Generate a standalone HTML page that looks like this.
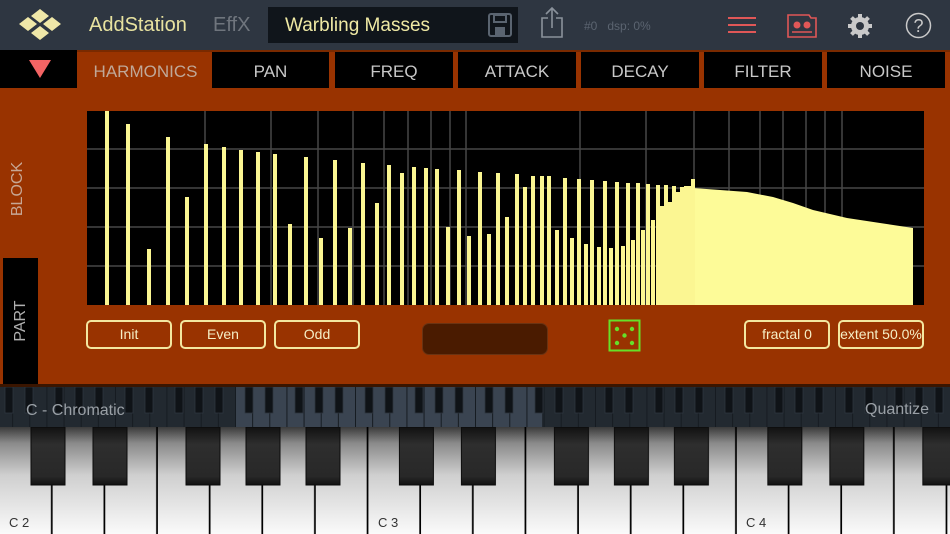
<!DOCTYPE html>
<html><head><meta charset="utf-8"><style>
*{margin:0;padding:0;box-sizing:border-box}
body{width:950px;height:534px;overflow:hidden;background:#993300;font-family:"Liberation Sans",sans-serif;position:relative}
.a{position:absolute}
.top{left:0;top:0;width:950px;height:50px;background:#2e3641}
.tab{position:absolute;top:52px;height:36px;background:#000;color:#c8c8c8;font-size:17px;text-align:center;line-height:39px}
.btn{position:absolute;top:320px;height:29px;border:2px solid #f3e7a0;border-radius:5px;color:#f6efc6;font-size:14px;text-align:center;line-height:25px}
</style></head><body>
<div class="a top"></div>
<svg class="a" style="left:16px;top:8px" width="48" height="34" viewBox="0 0 48 34">
<g fill="#efe7a8"><polygon points="24,1 33,8 24,15 15,8"/><polygon points="12,9 21,16 12,23 3,16"/><polygon points="36,9 45,16 36,23 27,16"/><polygon points="24,18 33,25 24,32 15,25"/></g></svg>
<div class="a" style="left:89px;top:14px;font-size:20px;color:#e8e3a0">AddStation</div>
<div class="a" style="left:213px;top:14px;font-size:20px;color:#6f757d">EffX</div>
<div class="a" style="left:268px;top:7px;width:250px;height:36px;background:#10151b"></div>
<div class="a" style="left:285px;top:15px;font-size:19px;color:#efe9a4">Warbling Masses</div>
<svg class="a" style="left:488px;top:13px" width="24" height="24" viewBox="0 0 24 24"><rect x="1" y="1" width="22" height="22" rx="2" fill="none" stroke="#5a6470" stroke-width="2"/><rect x="6" y="2" width="12" height="7" fill="none" stroke="#5a6470" stroke-width="2"/><rect x="7" y="14" width="10" height="9" fill="#5a6470"/></svg>
<svg class="a" style="left:540px;top:6px" width="24" height="32" viewBox="0 0 24 32"><path d="M8 12H2V31H22V12H16M12 22V2M6 8L12 2L18 8" fill="none" stroke="#8a929b" stroke-width="1.6"/></svg>
<div class="a" style="left:584px;top:19px;font-size:12px;color:#5b6470">#0&nbsp;&nbsp;&nbsp;dsp: 0%</div>
<svg class="a" style="left:728px;top:16px" width="28" height="18"><g stroke="#e05757" stroke-width="2"><line x1="0" y1="2" x2="28" y2="2"/><line x1="0" y1="9" x2="28" y2="9"/><line x1="0" y1="16" x2="28" y2="16"/></g></svg>
<svg class="a" style="left:787px;top:14px" width="30" height="24" viewBox="0 0 30 24"><path d="M1 1H22L24 4H29V23H1Z" fill="none" stroke="#e05757" stroke-width="1.6"/><circle cx="10" cy="11" r="3.5" fill="#e05757"/><circle cx="20" cy="11" r="3.5" fill="#e05757"/><line x1="5" y1="18" x2="25" y2="18" stroke="#e05757" stroke-width="1.5"/></svg>
<svg class="a" style="left:847px;top:13px" width="26" height="26" viewBox="0 0 26 26"><g fill="#c9c9c9"><circle cx="13" cy="13" r="9"/><g stroke="#c9c9c9" stroke-width="4"><line x1="13" y1="1" x2="13" y2="25"/><line x1="1" y1="13" x2="25" y2="13"/><line x1="4.5" y1="4.5" x2="21.5" y2="21.5"/><line x1="21.5" y1="4.5" x2="4.5" y2="21.5"/></g></g><circle cx="13" cy="13" r="4" fill="#2e3641"/></svg>
<svg class="a" style="left:905px;top:12px" width="27" height="27" viewBox="0 0 27 27"><circle cx="13.5" cy="13.5" r="12" fill="none" stroke="#c9c9c9" stroke-width="1.5"/><text x="13.5" y="20" font-size="18" text-anchor="middle" fill="#c9c9c9" font-family="Liberation Sans">?</text></svg>

<div class="a" style="left:0;top:50px;width:950px;height:2px;background:#7a2a00"></div>
<div class="a" style="left:0;top:50px;width:77px;height:38px;background:#000"></div>
<svg class="a" style="left:28px;top:59px" width="24" height="20"><polygon points="1,1 23,1 12,19" fill="#f46464"/></svg>
<div class="a" style="left:78px;top:62px;width:135px;text-align:center;font-size:17px;color:#c0a898">HARMONICS</div>
<div class="tab" style="left:212px;width:117px">PAN</div>
<div class="tab" style="left:335px;width:118px">FREQ</div>
<div class="tab" style="left:458px;width:118px">ATTACK</div>
<div class="tab" style="left:581px;width:118px">DECAY</div>
<div class="tab" style="left:704px;width:118px">FILTER</div>
<div class="tab" style="left:827px;width:118px">NOISE</div>

<div class="a" style="left:0;top:110px;width:36px;height:160px;"><div style="position:absolute;left:-62px;top:70px;width:160px;text-align:center;transform:rotate(-90deg);font-size:16px;color:#c7a794">BLOCK</div></div>
<div class="a" style="left:3px;top:258px;width:35px;height:126px;background:#000"><div style="position:absolute;left:-45px;top:54px;width:126px;text-align:center;transform:rotate(-90deg);font-size:16px;color:#b0b0b0">PART</div></div>

<svg class="a" style="left:0;top:0" width="950" height="320">
<rect x="87" y="111" width="837" height="194" fill="#000"/>
<g stroke="#474747" stroke-width="1.5">
<line x1="87" y1="149" x2="924" y2="149"/><line x1="87" y1="188" x2="924" y2="188"/><line x1="87" y1="227" x2="924" y2="227"/><line x1="87" y1="266" x2="924" y2="266"/>
<line x1="205" y1="111" x2="205" y2="305"/><line x1="271" y1="111" x2="271" y2="305"/><line x1="318" y1="111" x2="318" y2="305"/><line x1="353" y1="111" x2="353" y2="305"/><line x1="384" y1="111" x2="384" y2="305"/><line x1="408" y1="111" x2="408" y2="305"/><line x1="431" y1="111" x2="431" y2="305"/><line x1="450" y1="111" x2="450" y2="305"/><line x1="466" y1="111" x2="466" y2="305"/><line x1="580" y1="111" x2="580" y2="305"/><line x1="646" y1="111" x2="646" y2="305"/><line x1="694" y1="111" x2="694" y2="305"/><line x1="729" y1="111" x2="729" y2="305"/><line x1="760" y1="111" x2="760" y2="305"/><line x1="783" y1="111" x2="783" y2="305"/><line x1="806" y1="111" x2="806" y2="305"/><line x1="825" y1="111" x2="825" y2="305"/><line x1="842" y1="111" x2="842" y2="305"/>
</g>
<polygon points="693,188 747,192 773,197 793,203 813,210 847,218 880,223 913,228 913,305 693,305" fill="#fdfb98"/>
<g fill="#fbf692" transform="translate(-0.5,0)">
<rect x="105.5" y="111" width="4" height="194"/><rect x="126.5" y="124" width="4" height="181"/><rect x="147.5" y="249" width="4" height="56"/><rect x="166.5" y="137" width="4" height="168"/><rect x="185.5" y="197" width="4" height="108"/><rect x="204.5" y="144" width="4" height="161"/><rect x="222.5" y="147" width="4" height="158"/><rect x="239.5" y="150" width="4" height="155"/><rect x="256.5" y="152" width="4" height="153"/><rect x="273.5" y="154" width="4" height="151"/><rect x="288.5" y="224" width="4" height="81"/><rect x="304.5" y="157" width="4" height="148"/><rect x="319.5" y="238" width="4" height="67"/><rect x="333.5" y="160" width="4" height="145"/><rect x="348.5" y="228" width="4" height="77"/><rect x="361.5" y="163" width="4" height="142"/><rect x="375.5" y="203" width="4" height="102"/><rect x="387.5" y="165" width="4" height="140"/><rect x="400.5" y="173" width="4" height="132"/><rect x="412.5" y="167" width="4" height="138"/><rect x="424.5" y="168" width="4" height="137"/><rect x="435.5" y="169" width="4" height="136"/><rect x="446.5" y="227" width="4" height="78"/><rect x="457.5" y="170" width="4" height="135"/><rect x="467.5" y="236" width="4" height="69"/><rect x="478.5" y="172" width="4" height="133"/><rect x="487.5" y="234" width="4" height="71"/><rect x="496.5" y="173" width="4" height="132"/><rect x="505.5" y="217" width="4" height="88"/><rect x="515.5" y="174" width="4" height="131"/><rect x="523.5" y="187" width="4" height="118"/><rect x="531.5" y="176" width="4" height="129"/><rect x="540.5" y="176" width="4" height="129"/><rect x="547.5" y="176" width="4" height="129"/><rect x="555.5" y="230" width="4" height="75"/><rect x="563.5" y="178" width="4" height="127"/><rect x="570.5" y="238" width="4" height="67"/><rect x="577.5" y="179" width="4" height="126"/><rect x="584.5" y="244" width="4" height="61"/><rect x="590.5" y="180" width="4" height="125"/><rect x="597.5" y="247" width="4" height="58"/><rect x="603.5" y="181" width="4" height="124"/><rect x="609.5" y="248" width="4" height="57"/><rect x="615.5" y="182" width="4" height="123"/><rect x="621.5" y="246" width="4" height="59"/><rect x="626.5" y="183" width="4" height="122"/><rect x="631.5" y="240" width="4" height="65"/><rect x="636.5" y="183" width="4" height="122"/><rect x="641.5" y="230" width="4" height="75"/><rect x="646.5" y="184" width="4" height="121"/><rect x="651.5" y="220" width="4" height="85"/><rect x="656.5" y="185" width="4" height="120"/><rect x="660.5" y="206" width="4" height="99"/><rect x="664.5" y="185" width="4" height="120"/><rect x="668.5" y="202" width="4" height="103"/><rect x="672.5" y="186" width="4" height="119"/><rect x="676.5" y="192" width="4" height="113"/><rect x="680.5" y="187" width="4" height="118"/><rect x="684.5" y="186" width="4" height="119"/><rect x="687.5" y="186" width="4" height="119"/><rect x="691.5" y="179" width="4" height="126"/>
</g>
</svg>

<div class="btn" style="left:86px;width:86px">Init</div>
<div class="btn" style="left:180px;width:86px">Even</div>
<div class="btn" style="left:274px;width:86px">Odd</div>
<div class="a" style="left:422px;top:323px;width:126px;height:32px;background:#4a1b00;border:1px solid #6a3312;border-radius:7px"></div>
<svg class="a" style="left:608px;top:319px" width="33" height="33"><rect x="1.5" y="1.5" width="30" height="30" fill="none" stroke="#66e028" stroke-width="2"/><g fill="#66e028"><circle cx="9" cy="10" r="2.2"/><circle cx="24" cy="10" r="2.2"/><circle cx="16.5" cy="16.5" r="2.2"/><circle cx="9" cy="24" r="2.2"/><circle cx="24" cy="24" r="2.2"/></g></svg>
<div class="btn" style="left:744px;width:86px">fractal 0</div>
<div class="btn" style="left:838px;width:86px">extent 50.0%</div>

<div class="a" style="left:0;top:384px;width:950px;height:3px;background:#3a1500"></div>
<svg class="a" style="left:0;top:387px" width="950" height="40">
<defs>
<pattern id="mw" patternUnits="userSpaceOnUse" x="115" y="0" width="17.143" height="40"><line x1="0.5" y1="0" x2="0.5" y2="40" stroke="#161b21" stroke-width="1"/></pattern>
<pattern id="mb" patternUnits="userSpaceOnUse" x="115" y="0" width="120" height="40"><g fill="#0f1317" stroke="#2c343d" stroke-width="0.8"><rect x="10" y="0" width="8" height="26"/><rect x="30" y="0" width="8" height="26"/><rect x="60" y="0" width="8" height="26"/><rect x="80" y="0" width="8" height="26"/><rect x="100" y="0" width="8" height="26"/></g></pattern>
</defs>
<rect width="950" height="40" fill="#222930"/>
<rect x="235" width="307" height="40" fill="#3a4451"/>
<rect width="950" height="40" fill="url(#mw)"/>
<rect width="950" height="40" fill="url(#mb)"/>
<text x="26" y="28" font-size="16" fill="#9aa0a6" font-family="Liberation Sans">C - Chromatic</text>
<text x="865" y="27" font-size="16" fill="#9aa0a6" font-family="Liberation Sans">Quantize</text>
</svg>

<svg class="a" style="left:0;top:427px" width="950" height="107">
<defs>
<linearGradient id="wg" x1="0" y1="0" x2="0" y2="1"><stop offset="0" stop-color="#3a3a3a"/><stop offset="0.15" stop-color="#8a8a8a"/><stop offset="0.45" stop-color="#cfcfcf"/><stop offset="1" stop-color="#fafafa"/></linearGradient>
<linearGradient id="bg" x1="0" y1="0" x2="0" y2="1"><stop offset="0" stop-color="#111"/><stop offset="0.3" stop-color="#2e2e2e"/><stop offset="0.85" stop-color="#282828"/><stop offset="1" stop-color="#111"/></linearGradient>
<pattern id="ww" patternUnits="userSpaceOnUse" x="0" y="0" width="52.63" height="107"><line x1="52" y1="0" x2="52" y2="107" stroke="#000" stroke-width="2.2"/></pattern>
<pattern id="bk" patternUnits="userSpaceOnUse" x="0" y="0" width="368.42" height="107"><g fill="url(#bg)" stroke="#0a0a0a" stroke-width="1"><rect x="31" y="0" width="34" height="58"/><rect x="93" y="0" width="34" height="58"/><rect x="186" y="0" width="34" height="58"/><rect x="246" y="0" width="34" height="58"/><rect x="306" y="0" width="34" height="58"/></g></pattern>
</defs>
<rect width="950" height="107" fill="url(#wg)"/>
<rect width="950" height="107" fill="url(#ww)"/>
<rect width="950" height="107" fill="url(#bk)"/>
<g font-size="13" fill="#333" font-family="Liberation Sans"><text x="9" y="100">C 2</text><text x="378" y="100">C 3</text><text x="746" y="100">C 4</text></g>
</svg>
</body></html>
